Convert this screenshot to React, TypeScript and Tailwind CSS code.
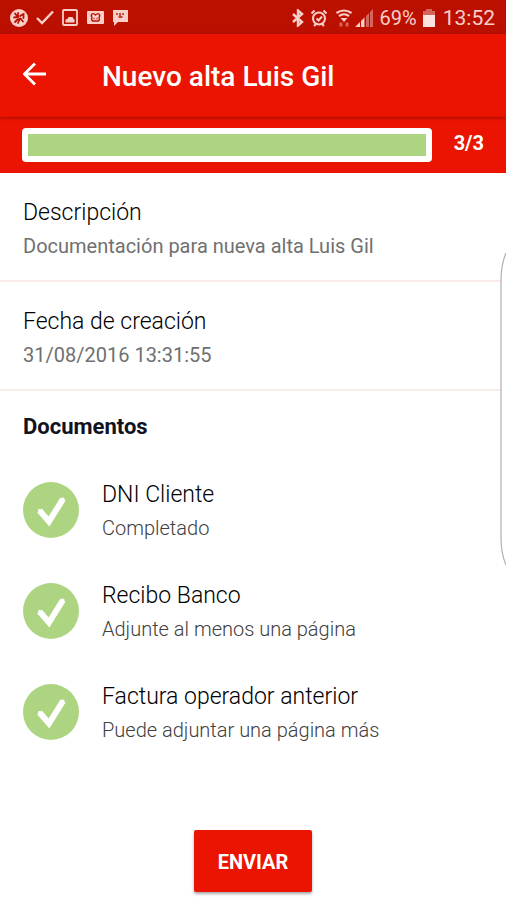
interface DocumentItem {
    title: string,
    status: string,
}

const documents: DocumentItem[] = [
    { title: 'DNI Cliente', status: 'Completado' },
    { title: 'Recibo Banco', status: 'Adjunte al menos una página' },
    { title: 'Factura operador anterior', status: 'Puede adjuntar una página más' },
]

const StatusBar = () => {
    return (
        <div className="h-[34px] flex items-center justify-between bg-[#bb1000] pl-[10px] pr-[11px] pt-[2px] text-[#f9cfca]">
            <div className="flex items-center gap-2">
                <svg className="w-[18px] h-[18px]" viewBox="0 0 18 18">
                    <circle cx="9" cy="9" r="9" fill="currentColor" />
                    <path d="M5 4.500l2 2.500M8 4v4l-4 .5M10 7l3.500-2v4M5 13l3-3M10.500 9.500l2.500 3M8 14l2-4.500" fill="none" stroke="#bb1000" strokeWidth="1.8" strokeLinecap="round" />
                </svg>
                <svg className="w-[18px] h-[18px]" viewBox="0 0 18 18" fill="none" stroke="currentColor" strokeWidth="2.4">
                    <path d="M1 9l5 5L17 2.500" />
                </svg>
                <svg className="w-[16px] h-[18px]" viewBox="0 0 16 18" fill="none" stroke="currentColor" strokeWidth="1.8">
                    <rect x="1" y="1" width="14" height="15" rx="1" />
                    <path d="M3.500 13.500v-3l2-.5 1-2h4l1 2 1 .5v3z" fill="currentColor" stroke="none" />
                </svg>
                <svg className="w-[18px] h-[18px]" viewBox="0 0 18 18">
                    <rect x="1" y="2" width="17" height="13" rx="1" fill="currentColor" />
                    <path d="M6 5q1.500-1 3.500 1 2-2 3.500-1 1.500 2 0 3.500 1 2-.5 3.500h-6q-1.500-1.500-.5-3.500Q4.500 7 6 5zM7.500 9.500h1M10.500 9.500h1" fill="none" stroke="#bb1000" strokeWidth="1.3" />
                </svg>
                <svg className="w-[17px] h-[18px]" viewBox="0 0 17 18">
                    <path d="M1 1h15v12H6l-4 4v-4H1z" fill="currentColor" />
                    <path d="M5 4v2M8 4v3M11 4v2M6.500 8h4" stroke="#bb1000" strokeWidth="1.4" />
                </svg>
            </div>
            <div className="flex items-center">
                <svg className="w-[12px] h-[18px]" viewBox="0 0 12 18" fill="none" stroke="currentColor" strokeWidth="2.4">
                    <path d="M1 5l9 8-4 3.500v-15L10 5l-9 8" />
                </svg>
                <svg className="ml-[6px] w-[18px] h-[18px]" viewBox="0 0 18 18" fill="none" stroke="currentColor" strokeWidth="2">
                    <circle cx="9" cy="9.500" r="6" />
                    <path d="M6.500 9.500l2 2 3.500-4M1.500 4.500l3-3M16.500 4.500l-3-3M4 17l2-2M14 17l-2-2" />
                </svg>
                <svg className="ml-[7px] w-[18px] h-[18px]" viewBox="0 0 18 18" fill="none" stroke="currentColor" strokeWidth="2.2">
                    <path d="M1.500 4q7.500-5 15 0M4 7q5-3.500 10 0" />
                    <path d="M5.500 9h7L9 13z" fill="currentColor" stroke="none" />
                    <path d="M6 17.500v-4M12 13.500v4" strokeWidth="3" opacity="0.45" />
                </svg>
                <svg className="ml-[2px] w-[18px] h-[18px]" viewBox="0 0 18 18" fill="currentColor">
                    <path d="M18 0v18h-3V3zM14 4v14h-3V7zM10 8v10H7v-7z" opacity="0.45" />
                    <path d="M9 9v9H6v-6zM5 13v5H0z" />
                </svg>
                <span className="ml-[7px] text-[20px] leading-6">69%</span>
                <svg className="ml-[6px] w-[12px] h-[18px]" viewBox="0 0 12 18" fill="currentColor">
                    <path d="M3 0h6v2h3v5H0V2h3z" opacity="0.45" />
                    <path d="M0 6h12v12H0z" fill="#fbe3e0" />
                </svg>
                <span className="ml-2 text-[21px] leading-6">13:52</span>
            </div>
        </div>
    )
}

const InfoSection = ({ label, value }: { label: string, value: string }) => {
    return (
        <section className="pt-6 pb-[18px] px-[23px] border-b-2 border-[#fcebeb]">
            <h2 className="text-[23px] leading-8 font-light text-black">{label}</h2>
            <p className="pt-px text-[20px] leading-8 text-[#707070]">{value}</p>
        </section>
    )
}

const App = () => {
    return (
        <div className="relative min-h-screen flex flex-col bg-white font-['Roboto',sans-serif]">
            <StatusBar />

            <header className="h-[83px] flex items-center bg-[#ea1400] px-[23px] pt-[2px] text-white shadow-[0_1px_3px_rgba(80,0,0,0.5)] z-10">
                <button type="button" aria-label="Volver" className="w-[79px] pb-[6px]">
                    <svg className="w-6 h-6" viewBox="0 0 24 24" fill="none" stroke="currentColor" strokeWidth="2.8">
                        <path d="M23 12H2M12 1.500L1.500 12 12 22.500" />
                    </svg>
                </button>
                <h1 className="text-[28px] leading-8 font-medium">Nuevo alta Luis Gil</h1>
            </header>

            <div className="h-14 flex items-center bg-[#ea1400] px-[22px] text-white">
                <div role="progressbar" aria-label="Documentos completados" aria-valuemin={0} aria-valuemax={3} aria-valuenow={3} className="flex-1 h-[34px] p-[6px] rounded-sm bg-white">
                    <div className="h-full bg-[#add581]" />
                </div>
                <span className="ml-[22px] pb-1 text-[20px] leading-6 font-bold">3/3</span>
            </div>

            <main className="flex-1 flex flex-col">
                <InfoSection label="Descripción" value="Documentación para nueva alta Luis Gil" />
                <InfoSection label="Fecha de creación" value="31/08/2016 13:31:55" />

                <section className="pt-5 px-[23px]">
                    <h2 className="text-[22px] leading-8 font-bold text-[#121220]">Documentos</h2>
                    <ul className="pt-9 flex flex-col gap-9">
                        {documents.map((item) => (
                            <li key={item.title} className="flex items-start gap-[23px]">
                                <svg className="mt-[3px] w-14 h-14 shrink-0" viewBox="0 0 56 56">
                                    <circle cx="28" cy="28" r="28" fill="#add581" />
                                    <path d="M16.500 28.500L26 39.500L40 17" fill="none" stroke="#fff" strokeWidth="6" />
                                    <path d="M16.500 28.500L26 39.500L40 17" fill="none" stroke="#fff" strokeWidth="3" strokeLinecap="round" />
                                </svg>
                                <div>
                                    <h3 className="text-[23px] leading-8 font-light text-black">{item.title}</h3>
                                    <p className="pt-px text-[20px] leading-8 font-light text-[#404040]">{item.status}</p>
                                </div>
                            </li>
                        ))}
                    </ul>
                </section>

                <div className="mt-auto pb-2 flex justify-center">
                    <button type="button" className="px-6 pt-5 pb-[18px] rounded-xs bg-[#ea1400] text-[20px] leading-6 font-bold text-white shadow-[0_2px_3px_rgba(0,0,0,0.35)]">ENVIAR</button>
                </div>
            </main>

            {/* edge panel handle */}
            <svg className="absolute right-0 top-[252px] w-[6px] h-[314px]" viewBox="0 0 6 314">
                <path d="M6 1Q1 13 1 28v258q0 15 5 27" fill="#fff" stroke="#b0b0b0" strokeWidth="1.2" />
            </svg>
        </div>
    )
}

export default App
